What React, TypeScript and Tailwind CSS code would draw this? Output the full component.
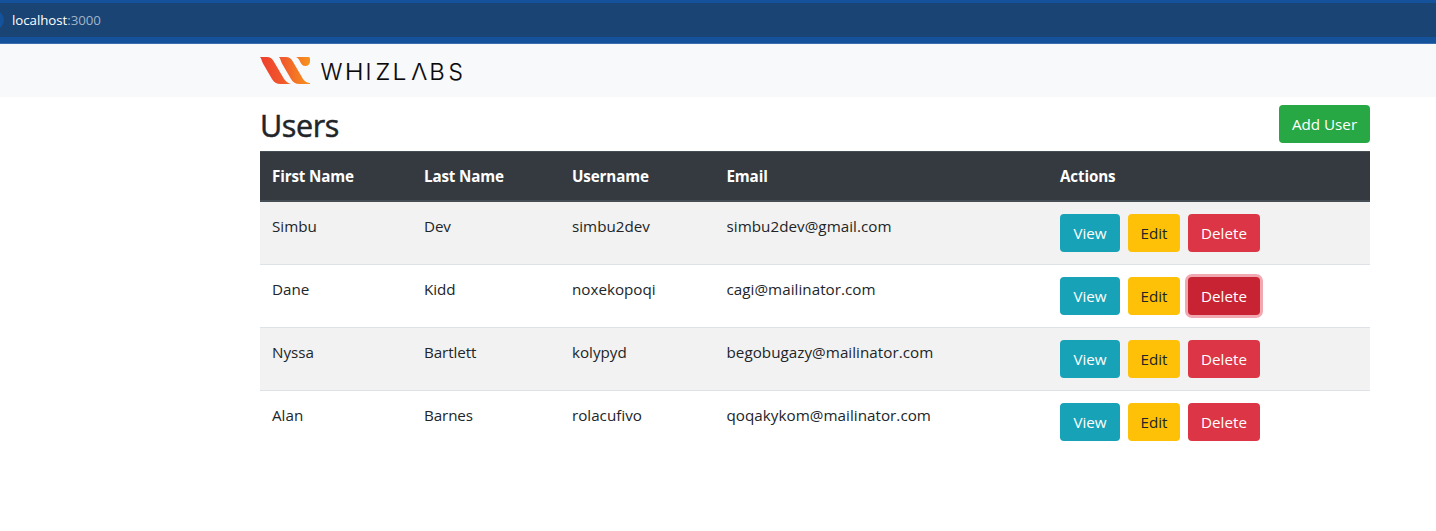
import React from "react";

type User = { first: string; last: string; username: string; email: string; deleteFocused?: boolean };

const users: User[] = [
  { first: "Simbu", last: "Dev", username: "simbu2dev", email: "simbu2dev@gmail.com" },
  { first: "Dane", last: "Kidd", username: "noxekopoqi", email: "cagi@mailinator.com", deleteFocused: true },
  { first: "Nyssa", last: "Bartlett", username: "kolypyd", email: "begobugazy@mailinator.com" },
  { first: "Alan", last: "Barnes", username: "rolacufivo", email: "qoqakykom@mailinator.com" },
];

const columns = "grid grid-cols-[152px_148px_154.5px_333.5px_1fr]";
const button = "flex h-[38px] items-center justify-center rounded-[4px] leading-6";

// The wordmark is set wide: each letter has its own offset and stretch.
const wordmark: [string, number, number][] = [
  ["W", 60.5, 1],
  ["H", 84.8, 1.12],
  ["I", 105.6, 1],
  ["Z", 115.6, 1.05],
  ["L", 132.6, 1.08],
  ["Λ", 151.2, 1.05],
  ["B", 169.2, 1.05],
  ["S", 188.4, 1],
];

function Logo() {
  return (
    <svg width="204" height="30" viewBox="0 0 204 30" className="block" role="img" aria-label="Whizlabs">
      <defs>
        <linearGradient id="flame" x1="0" y1="0" x2="50" y2="0" gradientUnits="userSpaceOnUse">
          <stop offset="0" stopColor="#ee3e2e" />
          <stop offset="0.45" stopColor="#f0592b" />
          <stop offset="1" stopColor="#f7931e" />
        </linearGradient>
      </defs>
      <g fill="url(#flame)">
        <path d="M0 1H7C10 1 12 2.500 13.500 5L22 19.500C24 23 26.500 27 31 28H20.500C16.500 28 14 26.500 12 23L3 7.500C1.800 5 1.500 2.500 0 1Z" />
        <path d="M19 1H26C29 1 31 2.500 32.500 5L41 19.500C43 23 45 27 50 27V28H39.500C35.500 28 33 26.500 31 23L22 7.500C20.800 5 20.500 2.500 19 1Z" />
        <path d="M36 1H48.500Q50 1 50 2.500V5.500C50 8 48 10 45.500 10C42.500 10 41.200 8 40 5.500C39 3.300 38 1.700 36 1Z" />
      </g>
      <g fontSize="22.7" fontWeight="300" fill="#080808" stroke="#080808" strokeWidth="0.15" className="font-['Inter',sans-serif]">
        {wordmark.map(([letter, x, stretch]) => (
          <text key={letter} transform={`translate(${x} 24) scale(${stretch} 1)`}>{letter}</text>
        ))}
      </g>
    </svg>
  );
}

export default function App() {
  return (
    <div className="h-[531px] overflow-hidden bg-white font-['Open_Sans','Noto_Sans',sans-serif] text-[15.2px] text-[#212529]">
      <div className="h-11 border-b border-[#3a6cae] bg-[#14529c] pt-[3px]">
        <div className="flex h-[34px] items-center overflow-hidden bg-[#194474]">
          <span className="-ml-4 h-5 w-5 shrink-0 rounded-full bg-[#14529c]" />
          <span className="ml-2 text-[13.3px] leading-5 tracking-[-0.05px] text-white">
            localhost<span className="text-[#a3b4c7]">:3000</span>
          </span>
        </div>
      </div>
      <nav className="h-[53px] bg-[#f8f9fb] pl-[260px] pt-3">
        <Logo />
      </nav>
      <main className="ml-[260px] w-[1110px]">
        <div className="flex h-[54px] items-start justify-between pt-2">
          <h2 className="pt-[1px] text-[30.5px] font-medium leading-[38px] tracking-[-0.4px] [-webkit-text-stroke:0.5px_#212529]">Users</h2>
          <button className={`${button} w-[91px] bg-[#28a745] text-white`}>Add User</button>
        </div>
        <div className={`${columns} h-[51px] border-b-2 border-t border-[#454d55] bg-[#343a40] pt-3 font-bold leading-6 tracking-[-0.15px] text-white`}>
          {["First Name", "Last Name", "Username", "Email", "Actions"].map((label) => (
            <div key={label} className="pl-3">{label}</div>
          ))}
        </div>
        <div>
          {users.map((user) => (
            <div key={user.username} className={`${columns} h-[63px] border-b border-[#dee2e6] pt-3 leading-6 odd:bg-[#f2f2f2] last:border-0`}>
              <div className="pl-3">{user.first}</div>
              <div className="pl-3 tracking-[-0.1px]">{user.last}</div>
              <div className="pl-3">{user.username}</div>
              <div className="pl-3 tracking-[0.04px]">{user.email}</div>
              <div className="flex gap-2 pl-3">
                <button className={`${button} w-[60px] bg-[#17a2b8] text-white`}>View</button>
                <button className={`${button} w-[52px] bg-[#ffc107]`}>Edit</button>
                <button className={`${button} w-[72px] text-white ${user.deleteFocused ? "bg-[#c82333] shadow-[0_0_0_3px_#f1a8b0]" : "bg-[#dc3545]"}`}>Delete</button>
              </div>
            </div>
          ))}
        </div>
      </main>
    </div>
  );
}
